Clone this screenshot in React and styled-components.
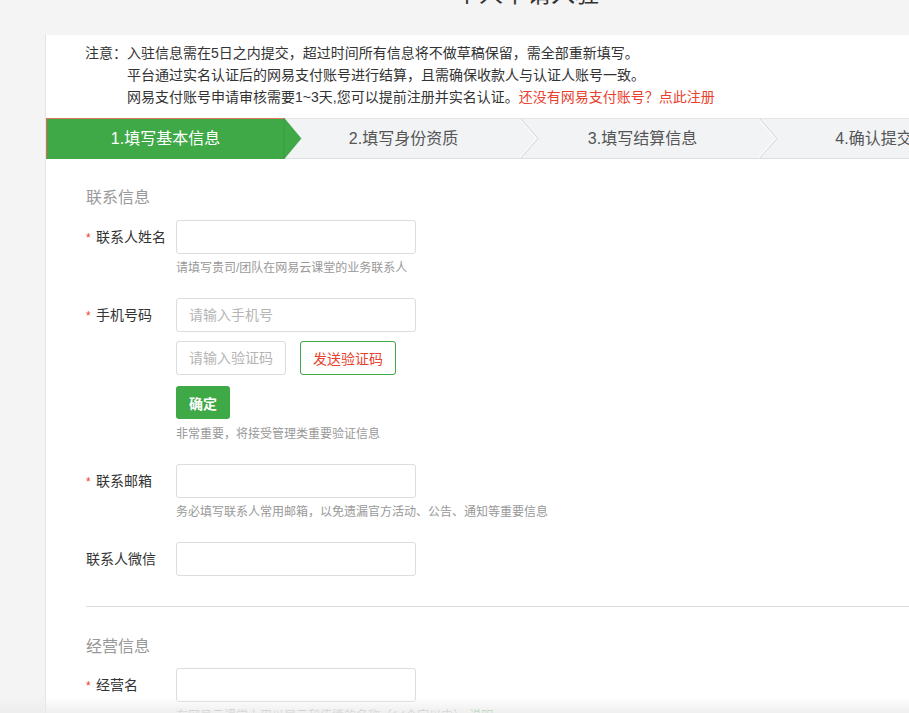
import React from "react";
import styled, { createGlobalStyle } from "styled-components";

const GREEN = "#3fa847";
const RED = "#e8422f";

const GlobalStyle = createGlobalStyle`
  html, body {
    margin: 0;
    padding: 0;
    background: #f4f4f4;
    overflow: hidden;
    font-family: "Liberation Sans", "Noto Sans CJK SC", sans-serif;
    color: #333;
  }
  * { box-sizing: border-box; }
`;

const Page = styled.div`
  width: 964px;
  margin-left: 45px;
`;

const Title = styled.h1`
  margin: -23px 0 0;
  height: 34px;
  line-height: 34px;
  font-size: 24px;
  font-weight: normal;
  text-align: center;
  color: #333;
`;

const Card = styled.div`
  margin-top: 24px;
  background: #fff;
  border-left: 1px solid #e4e4e4;
  padding-top: 7px;
  padding-bottom: 40px;
`;

const Notice = styled.div`
  display: flex;
  padding-left: 39px;
  font-size: 14px;
  line-height: 22px;
  color: #333;
`;

const NoticeLabel = styled.span`
  width: 42px;
  flex: none;
`;

const NoticeLines = styled.div`
  display: flex;
  flex-direction: column;
`;

const NoticeLink = styled.a`
  color: ${RED};
  text-decoration: none;
`;

const Steps = styled.div`
  display: flex;
  margin-top: 10px;
  background: #f1f3f5;
`;

const Step = styled.div`
  position: relative;
  flex: 0 0 ${(p) => p.$width}px;
  height: 41px;
  line-height: 39px;
  text-align: center;
  font-size: 16px;
  color: ${(p) => (p.$active ? "#fff" : "#555")};
  background: ${(p) => (p.$active ? GREEN : "#f1f3f5")};
  border-top: 1px solid ${(p) => (p.$active ? "#e0735e" : "#e2e4e6")};
  border-left: ${(p) => (p.$active ? "1px solid #d96a55" : "none")};
  border-bottom: 1px solid ${(p) => (p.$active ? GREEN : "#dcdfe2")};
`;

const StepArrow = styled.svg`
  position: absolute;
  top: -1px;
  left: 100%;
  margin-left: ${(p) => (p.$active ? "0" : "-2px")};
  width: 18px;
  height: 41px;
  z-index: 1;
  overflow: visible;
`;

const Form = styled.div`
  padding: 0 40px;
`;

const SectionTitle = styled.h3`
  margin: ${(p) => p.$top}px 0 ${(p) => p.$bottom}px;
  font-size: 16px;
  line-height: 24px;
  font-weight: normal;
  color: #999;
`;

const Row = styled.div`
  display: flex;
  margin-bottom: ${(p) => (p.$last ? 0 : 21)}px;
`;

const Label = styled.div`
  width: 90px;
  flex: none;
  height: 34px;
  line-height: 34px;
  font-size: 14px;
  color: #333;
`;

const Star = styled.span`
  display: inline-block;
  width: 10px;
  color: ${RED};
  font-size: 12px;
`;

const Field = styled.div`
  display: flex;
  flex-direction: column;
  align-items: flex-start;
`;

const Input = styled.input`
  width: ${(p) => p.$width || 240}px;
  height: 34px;
  padding: 0 12px;
  border: 1px solid #dcdcdc;
  border-radius: 3px;
  font-size: 14px;
  font-family: inherit;
  color: #333;
  outline: none;
  &::placeholder {
    color: #b5b5b5;
  }
`;

const InlineRow = styled.div`
  display: flex;
  gap: 14px;
  margin-top: 9px;
`;

const SendButton = styled.button`
  height: 34px;
  width: 96px;
  padding: 0;
  background: #fff;
  border: 1px solid ${GREEN};
  border-radius: 3px;
  color: ${RED};
  font-size: 14px;
  font-family: inherit;
`;

const ConfirmButton = styled.button`
  margin-top: 11px;
  height: 33px;
  width: 54px;
  padding: 0;
  background: ${GREEN};
  border: none;
  border-radius: 3px;
  color: #fff;
  font-size: 14px;
  font-weight: bold;
  font-family: inherit;
`;

const Hint = styled.div`
  margin-top: ${(p) => p.$top || 5}px;
  font-size: 12px;
  line-height: 18px;
  color: #999;
`;

const HintLink = styled.a`
  color: ${GREEN};
  text-decoration: none;
  margin-left: 4px;
`;

const Divider = styled.hr`
  margin: 30px 0 0;
  border: none;
  border-top: 1px solid #dddddd;
`;

const BottomFade = styled.div`
  position: fixed;
  left: 0;
  right: 0;
  bottom: 0;
  height: 16px;
  pointer-events: none;
  background: linear-gradient(rgba(238, 238, 238, 0), rgba(236, 236, 236, 0.85));
`;

const steps = [
  { text: "1.填写基本信息", width: 238 },
  { text: "2.填写身份资质", width: 239 },
  { text: "3.填写结算信息", width: 239 },
  { text: "4.确认提交", width: 224 },
];

const Arrow = ({ active }) => (
  <StepArrow $active={active} viewBox="0 0 18 41">
    {active ? (
      <polygon points="0,0 17,20.5 0,41" fill={GREEN} stroke="#37973f" strokeWidth="0.6" />
    ) : (
      <>
        <polyline points="-1.5,1 15.5,20.5 -1.5,40" fill="none" stroke="#fafbfc" strokeWidth="1.2" />
        <polyline points="0,1 17,20.5 0,40" fill="none" stroke="#d3d6da" strokeWidth="1" />
      </>
    )}
  </StepArrow>
);

const FormRow = ({ label, required, last, children }) => (
  <Row $last={last}>
    <Label>
      {required && <Star>*</Star>}
      {label}
    </Label>
    <Field>{children}</Field>
  </Row>
);

export default function App() {
  return (
    <>
      <GlobalStyle />
      <Page>
        <Title>个人申请入驻</Title>
        <Card>
          <Notice>
            <NoticeLabel>注意：</NoticeLabel>
            <NoticeLines>
              <span>入驻信息需在5日之内提交，超过时间所有信息将不做草稿保留，需全部重新填写。</span>
              <span>平台通过实名认证后的网易支付账号进行结算，且需确保收款人与认证人账号一致。</span>
              <span>
                网易支付账号申请审核需要1~3天,您可以提前注册并实名认证。
                <NoticeLink href="#">还没有网易支付账号？点此注册</NoticeLink>
              </span>
            </NoticeLines>
          </Notice>

          <Steps>
            {steps.map((s, i) => (
              <Step key={s.text} $active={i === 0} $width={s.width}>
                {s.text}
                {i < steps.length - 1 && <Arrow active={i === 0} />}
              </Step>
            ))}
          </Steps>

          <Form>
            <SectionTitle $top={27} $bottom={10}>联系信息</SectionTitle>
            <FormRow label="联系人姓名" required>
              <Input />
              <Hint>请填写贵司/团队在网易云课堂的业务联系人</Hint>
            </FormRow>
            <FormRow label="手机号码" required>
              <Input placeholder="请输入手机号" />
              <InlineRow>
                <Input $width={110} placeholder="请输入验证码" />
                <SendButton>发送验证码</SendButton>
              </InlineRow>
              <ConfirmButton>确定</ConfirmButton>
              <Hint $top={6}>非常重要，将接受管理类重要验证信息</Hint>
            </FormRow>
            <FormRow label="联系邮箱" required>
              <Input />
              <Hint>务必填写联系人常用邮箱，以免遗漏官方活动、公告、通知等重要信息</Hint>
            </FormRow>
            <FormRow label="联系人微信" last>
              <Input />
            </FormRow>

            <Divider />

            <SectionTitle $top={28} $bottom={9}>经营信息</SectionTitle>
            <FormRow label="经营名" required>
              <Input />
              <Hint>
                在网易云课堂上用以展示和传播的名称（14个字以内）
                <HintLink href="#">说明</HintLink>
              </Hint>
            </FormRow>
          </Form>
        </Card>
      </Page>
      <BottomFade />
    </>
  );
}
